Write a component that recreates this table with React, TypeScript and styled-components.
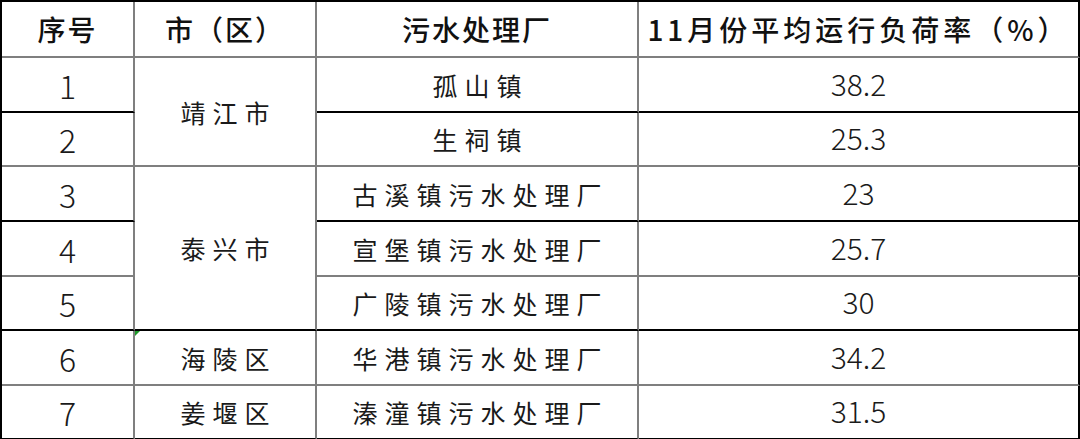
import { FC } from "react";
import styled, { createGlobalStyle } from "styled-components";

type Line = "black" | "gray";

interface Row {
    no: string;
    city?: { name: string; span: number };
    plant: string;
    rate: string;
    line: Line;
    height: number;
    flag?: boolean;
}

const rows: Row[] = [
    { no: "1", city: { name: "靖江市", span: 2 }, plant: "孤山镇", rate: "38.2", line: "black", height: 55 },
    { no: "2", plant: "生祠镇", rate: "25.3", line: "gray", height: 54 },
    { no: "3", city: { name: "泰兴市", span: 3 }, plant: "古溪镇污水处理厂", rate: "23", line: "black", height: 55 },
    { no: "4", plant: "宣堡镇污水处理厂", rate: "25.7", line: "gray", height: 55 },
    { no: "5", plant: "广陵镇污水处理厂", rate: "30", line: "black", height: 54 },
    { no: "6", city: { name: "海陵区", span: 1 }, plant: "华港镇污水处理厂", rate: "34.2", line: "gray", height: 55, flag: true },
    { no: "7", city: { name: "姜堰区", span: 1 }, plant: "溱潼镇污水处理厂", rate: "31.5", line: "black", height: 54 },
];

const columns = [133, 182, 322, 441];

const App: FC = () => {
    return (
        <>
            <GlobalStyle />
            <StyledTable>
                <colgroup>
                    {columns.map((w, i) => (
                        <Column key={i} $w={w} />
                    ))}
                </colgroup>
                <thead>
                    <TableRow $h={56}>
                        <HeadCell $line="gray">序号</HeadCell>
                        <HeadCell $line="gray">市（区）</HeadCell>
                        <HeadCell $line="gray">污水处理厂</HeadCell>
                        <HeadCell $line="gray" $last $spacing={4}>
                            11月份平均运行负荷率（%）
                        </HeadCell>
                    </TableRow>
                </thead>
                <tbody>
                    {rows.map((row, i) => {
                        // merged city cell takes the bottom line of its last row
                        const cityLine = row.city
                            ? rows[i + row.city.span - 1].line
                            : row.line;
                        return (
                            <TableRow key={row.no} $h={row.height}>
                                <NumberCell $line={row.line}>{row.no}</NumberCell>
                                {row.city && (
                                    <TextCell
                                        rowSpan={row.city.span}
                                        $line={cityLine}
                                        $flag={row.flag}
                                    >
                                        <Spaced>{row.city.name}</Spaced>
                                    </TextCell>
                                )}
                                <TextCell $line={row.line}>
                                    <Spaced>{row.plant}</Spaced>
                                </TextCell>
                                <RateCell $line={row.line} $last>
                                    {row.rate}
                                </RateCell>
                            </TableRow>
                        );
                    })}
                </tbody>
            </StyledTable>
        </>
    );
};

export default App;

const GlobalStyle = createGlobalStyle`
    html, body {
        margin: 0;
        padding: 0;
        background: #ffffff;
    }
`;

const StyledTable = styled.table`
    width: 1079px;
    table-layout: fixed;
    border-collapse: separate;
    border-spacing: 0;
    border-top: 2px solid #000;
    border-left: 2px solid #000;
    color: #111;
`;

const Column = styled.col<{ $w: number }>`
    width: ${({ $w }) => $w}px;
`;

const TableRow = styled.tr<{ $h: number }>`
    height: ${({ $h }) => $h}px;
`;

const Cell = styled.td<{ $line: Line; $last?: boolean; $flag?: boolean }>`
    position: relative;
    padding: 0;
    text-align: center;
    vertical-align: middle;
    border-bottom: 2px solid
        ${({ $line }) => ($line === "black" ? "#000" : "#7f7f7f")};
    border-right: 2px solid ${({ $last }) => ($last ? "#000" : "#7f7f7f")};
    white-space: nowrap;

    &::before {
        content: "";
        display: ${({ $flag }) => ($flag ? "block" : "none")};
        position: absolute;
        left: 0;
        top: 0;
        border-top: 5px solid #1f9a2a;
        border-right: 5px solid transparent;
    }
`;

const HeadCell = styled(Cell).attrs({ as: "th" })<{ $spacing?: number }>`
    font-family: "Noto Sans CJK SC", "Noto Sans", sans-serif;
    font-weight: 500;
    font-size: 28px;
    letter-spacing: ${({ $spacing }) => $spacing ?? 2}px;
`;

const NumberCell = styled(Cell)`
    font-family: "Noto Sans CJK SC", "Noto Sans", sans-serif;
    font-weight: 300;
    font-size: 32px;
    color: #1a1a1a;
`;

const RateCell = styled(Cell)`
    font-family: "Noto Sans CJK SC", "Noto Sans", sans-serif;
    font-weight: 300;
    font-size: 30px;
    color: #1a1a1a;
    padding-bottom: 4px;
`;

const TextCell = styled(Cell)`
    font-family: "Noto Sans CJK SC", "Noto Sans", sans-serif;
    font-weight: 400;
    font-size: 25px;
    color: #1a1a1a;
`;

const Spaced = styled.span`
    letter-spacing: 7px;
    margin-right: -7px;
`;
